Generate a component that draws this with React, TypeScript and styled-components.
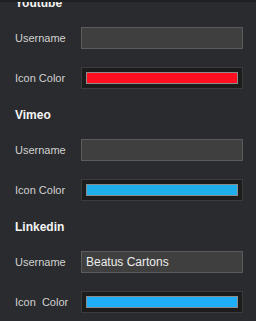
import React from "react";
import styled, { createGlobalStyle } from "styled-components";

const Global = createGlobalStyle`
  html, body { margin: 0; padding: 0; background: #2a2b2e; }
  * { box-sizing: border-box; }
`;

const Panel = styled.div`
  width: 256px;
  height: 321px;
  display: flex;
  flex-direction: column;
  background: #2a2b2e;
  font-family: "Liberation Sans", Arial, sans-serif;
  overflow: hidden;
`;

const TopEdge = styled.div`
  height: 2px;
  flex: none;
  background: #1f2022;
`;

const Scroller = styled.div`
  flex: 1;
  overflow: hidden;
`;

const List = styled.div`
  margin-top: -7px;
  display: flex;
  flex-direction: column;
`;

const Section = styled.section`
  display: flex;
  flex-direction: column;
  padding: 0 13px 18px 15px;
`;

const Heading = styled.h3`
  margin: 0 0 16px;
  font-size: 12px;
  line-height: 16px;
  font-weight: 700;
  color: #f4f4f4;
`;

const Rows = styled.div`
  display: flex;
  flex-direction: column;
  gap: 18px;
`;

const Row = styled.div`
  display: grid;
  grid-template-columns: 66px 162px;
  align-items: center;
  height: 22px;
`;

const Label = styled.span`
  font-size: 11px;
  color: #d2d2d2;
  white-space: pre;
`;

const TextInput = styled.div`
  height: 22px;
  border: 1px solid #5b5b5b;
  background: #3f3f3f;
  padding: 0 4px;
  display: flex;
  align-items: center;
  font-size: 12px;
  color: #ececec;
  white-space: nowrap;
`;

const ColorWell = styled.div`
  height: 22px;
  border: 1px solid #3b3b3b;
  background: #1c1c1d;
  padding: 4px;
  display: flex;
`;

const Swatch = styled.div<{ $color: string }>`
  flex: 1;
  border: 1px solid #8c8c8c;
  background: ${(p) => p.$color};
`;

type Item = { name: string; username: string; color: string; colorLabel: string };

const items: Item[] = [
  { name: "Youtube", username: "", color: "#ff0f1f", colorLabel: "Icon Color" },
  { name: "Vimeo", username: "", color: "#1eaee9", colorLabel: "Icon Color" },
  { name: "Linkedin", username: "Beatus Cartons", color: "#1eaff8", colorLabel: "Icon  Color" },
];

export default function App() {
  return (
    <>
      <Global />
      <Panel>
        <TopEdge />
        <Scroller>
          <List>
            {items.map((it) => (
              <Section key={it.name}>
                <Heading>{it.name}</Heading>
                <Rows>
                  <Row>
                    <Label>Username</Label>
                    <TextInput>{it.username}</TextInput>
                  </Row>
                  <Row>
                    <Label>{it.colorLabel}</Label>
                    <ColorWell>
                      <Swatch $color={it.color} />
                    </ColorWell>
                  </Row>
                </Rows>
              </Section>
            ))}
          </List>
        </Scroller>
      </Panel>
    </>
  );
}
